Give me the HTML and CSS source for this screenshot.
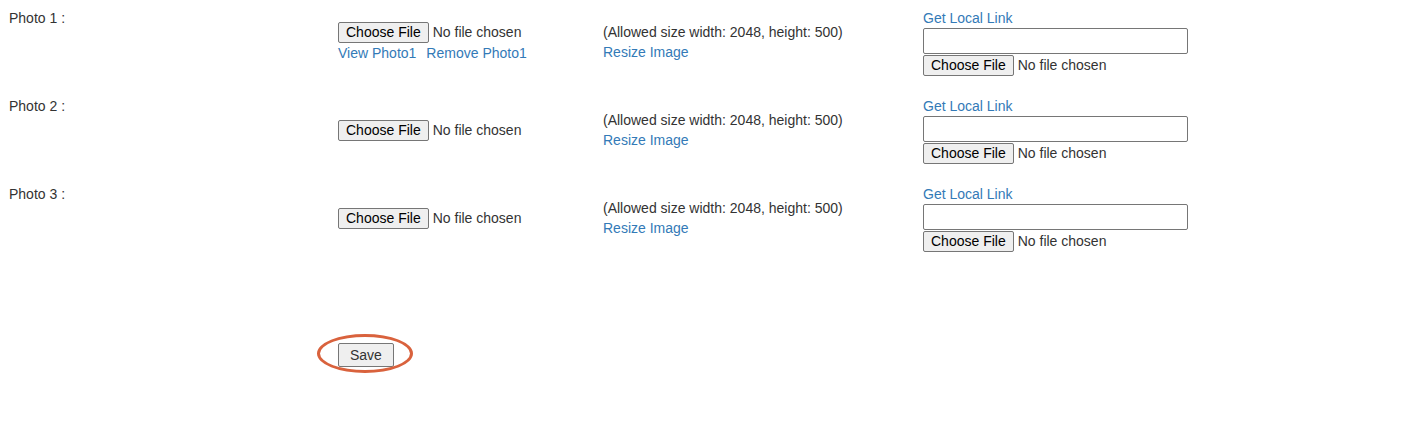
FILE: index.html
```html
<!DOCTYPE html>
<html lang="en">
<head>
  <meta charset="UTF-8">
  <title>Photos</title>
<link rel="stylesheet" href="styles.css">
</head>
<body>
<form class="photo-form">
  <div class="photo-row">
    <label class="photo-label" for="photo1">Photo 1 :</label>
    <div class="photo-file">
      <input type="file" id="photo1" name="photo1">
      <div class="photo-links">
        <a href="#">View Photo1</a>
        <a href="#">Remove Photo1</a>
      </div>
    </div>
    <div class="photo-info">
      <span>(Allowed size width: 2048, height: 500)</span>
      <a href="#">Resize Image</a>
    </div>
    <div class="photo-local">
      <a href="#">Get Local Link</a>
      <input type="text" class="local-link" name="link1">
      <input type="file" name="local1">
    </div>
  </div>

  <div class="photo-row">
    <label class="photo-label" for="photo2">Photo 2 :</label>
    <div class="photo-file">
      <input type="file" id="photo2" name="photo2">
    </div>
    <div class="photo-info">
      <span>(Allowed size width: 2048, height: 500)</span>
      <a href="#">Resize Image</a>
    </div>
    <div class="photo-local">
      <a href="#">Get Local Link</a>
      <input type="text" class="local-link" name="link2">
      <input type="file" name="local2">
    </div>
  </div>

  <div class="photo-row">
    <label class="photo-label" for="photo3">Photo 3 :</label>
    <div class="photo-file">
      <input type="file" id="photo3" name="photo3">
    </div>
    <div class="photo-info">
      <span>(Allowed size width: 2048, height: 500)</span>
      <a href="#">Resize Image</a>
    </div>
    <div class="photo-local">
      <a href="#">Get Local Link</a>
      <input type="text" class="local-link" name="link3">
      <input type="file" name="local3">
    </div>
  </div>

  <div class="form-actions">
    <span class="save-wrap">
      <button type="submit" class="save-btn">Save</button>
    </span>
  </div>
</form>
</body>
</html>
```

FILE: styles.css
```css
body {
  margin: 0;
  padding: 8px 8px;
  font-family: "Liberation Sans", Arial, sans-serif;
  font-size: 14px;
  line-height: 20px;
  color: #333;
  background: #fff;
}

a {
  color: #337ab7;
  text-decoration: none;
}

.photo-form {
  display: flex;
  flex-direction: column;
  gap: 20px;
}

.photo-row {
  display: grid;
  grid-template-columns: 330px 265px 320px 1fr;
  align-items: center;
}

.photo-label {
  align-self: start;
  padding-left: 1px;
}

.photo-file,
.photo-info,
.photo-local {
  display: flex;
  flex-direction: column;
  align-items: flex-start;
}

.photo-links {
  display: flex;
  gap: 10px;
}

input[type="file"] {
  font: inherit;
  color: #333;
  height: 21px;
  line-height: 21px;
  display: block;
}

input[type="file"]::file-selector-button {
  font: inherit;
  color: #000;
  height: 21px;
  line-height: 17px;
  padding: 1px 7px;
  margin: 0 4px 0 0;
  border: 1px solid #767676;
  border-radius: 2px;
  background: #efefef;
}

.local-link {
  box-sizing: border-box;
  width: 265px;
  height: 26px;
  margin: 0;
  border: 1px solid #767676;
  border-radius: 2px;
  font: inherit;
}

.photo-local input[type="file"] {
  margin-top: 1px;
}

.form-actions {
  padding: 71px 0 0 330px;
}

.save-wrap {
  position: relative;
  display: inline-block;
}

.save-wrap::before {
  content: "";
  position: absolute;
  left: -21px;
  right: -19px;
  top: -9px;
  bottom: -6px;
  border: 3px solid #d9623d;
  border-radius: 50%;
  pointer-events: none;
}

.save-btn {
  display: block;
  font: inherit;
  line-height: 16px;
  color: #333;
  padding: 3px 11px;
  border: 1px solid #767676;
  border-radius: 2px;
  background: #efefef;
}
```
